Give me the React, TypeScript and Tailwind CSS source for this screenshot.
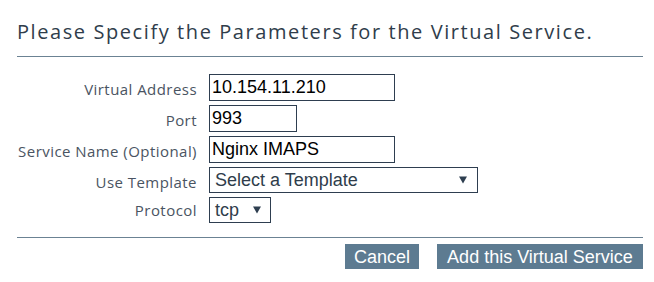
import React from "react";

const labelCls = "text-right text-[15px] leading-none text-[#4a5462] pr-[12px] tracking-[0.45px]";
const inputCls =
  "h-[27px] border border-[#2e3e50] bg-white px-[2px] text-[18px] leading-none text-black outline-none";

function Arrow() {
  return (
    <svg width="8" height="8" viewBox="0 0 8 8" className="shrink-0">
      <path d="M0 0.5 L8 0.5 L4 7.5 Z" fill="#2e3e50" />
    </svg>
  );
}

export default function App() {
  return (
    <div className="w-[654px] h-[282px] bg-white pl-[17px] pr-[11px]" style={{ fontFamily: '"Open Sans", "Noto Sans", sans-serif' }}>
      <div className="pt-[19px] h-[56px] text-[20px] leading-[26px] text-[#2f3d4b] tracking-[1.58px] whitespace-nowrap">
        Please Specify the Parameters for the Virtual Service.
      </div>
      <div className="h-px bg-[#6b8293]" />
      <div className="pt-[17px] grid grid-cols-[192px_auto] items-center">
        <div className={labelCls}>Virtual Address</div>
        <div className="mb-[4px]">
          <input readOnly value="10.154.11.210" className={inputCls + " w-[186px]"} style={{ fontFamily: '"Liberation Sans", Arial, sans-serif' }} />
        </div>
        <div className={labelCls}>Port</div>
        <div className="mb-[4px]">
          <input readOnly value="993" className={inputCls + " w-[88px]"} style={{ fontFamily: '"Liberation Sans", Arial, sans-serif' }} />
        </div>
        <div className={labelCls}>Service Name (Optional)</div>
        <div className="mb-[4px]">
          <input readOnly value="Nginx IMAPS" className={inputCls + " w-[186px]"} style={{ fontFamily: '"Liberation Sans", Arial, sans-serif' }} />
        </div>
        <div className={labelCls}>Use Template</div>
        <div className="mb-[4px]">
          <div className="h-[26px] w-[269px] border border-[#2e3e50] flex items-center justify-between pl-[5px] pr-[10px] text-[18px] text-[#2f3d4b]" style={{ fontFamily: '"Liberation Sans", Arial, sans-serif' }}>
            <span>Select a Template</span>
            <Arrow />
          </div>
        </div>
        <div className={labelCls}>Protocol</div>
        <div>
          <div className="h-[26px] w-[62px] border border-[#2e3e50] flex items-center justify-between pl-[5px] pr-[9px] text-[18px] text-[#2f3d4b]" style={{ fontFamily: '"Liberation Sans", Arial, sans-serif' }}>
            <span>tcp</span>
            <Arrow />
          </div>
        </div>
      </div>
      <div className="mt-[14px] h-px bg-[#6b8293]" />
      <div className="mt-[6px] flex justify-end gap-[18px]" style={{ fontFamily: '"Liberation Sans", Arial, sans-serif' }}>
        <button className="h-[25px] w-[74px] bg-[#5d7b91] text-white text-[18px] leading-none">Cancel</button>
        <button className="h-[25px] w-[206px] bg-[#5d7b91] text-white text-[18px] leading-none">Add this Virtual Service</button>
      </div>
    </div>
  );
}
